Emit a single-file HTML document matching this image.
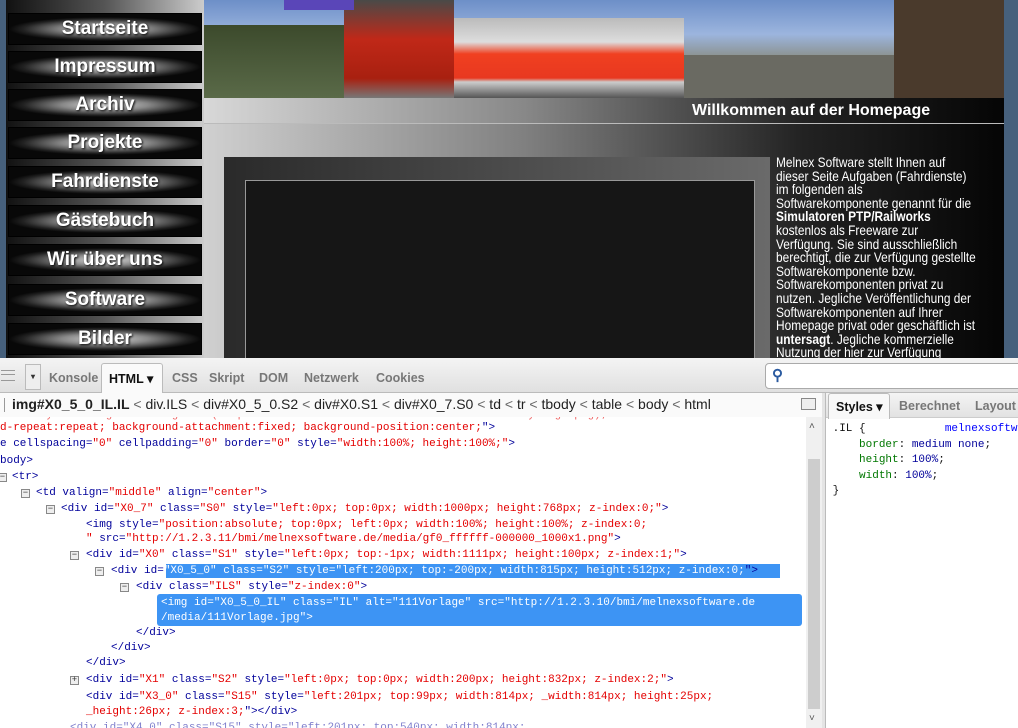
<!DOCTYPE html>
<html><head><meta charset="utf-8">
<style>
*{margin:0;padding:0;box-sizing:border-box}
body{width:1018px;height:728px;overflow:hidden;position:relative;background:#fff;font-family:"Liberation Sans",sans-serif}
.abs{position:absolute}
#site{left:0;top:0;width:1018px;height:358px;background:#46607c;overflow:hidden}
#side{left:6px;top:0;width:198px;height:358px;background:linear-gradient(90deg,#111 0%,#555 50%,#ccc 100%)}
.btn{position:absolute;left:8px;width:194px;height:32px;background:radial-gradient(ellipse 50% 40% at 50% 50%,#d8d8d8 0%,#888 45%,#222 85%,#080808 100%);border:1px solid #000;color:#fff;font-weight:bold;font-size:19px;text-align:center;line-height:30px;text-shadow:1px 1px 2px #000}
#hdr{left:204px;top:0;width:800px;height:98px;background:linear-gradient(180deg,#6d8fc8 0%,#9cb5de 35%,#8a8f88 60%,#56604a 100%);overflow:hidden}
#title{left:204px;top:98px;width:800px;height:26px;background:linear-gradient(90deg,#d8d8d8 0%,#888 40%,#222 75%,#050505 100%);border-bottom:1px solid #bbb;color:#fff;font-weight:bold;font-size:16px;line-height:25px;padding-left:488px}
#cont{left:204px;top:124px;width:800px;height:234px;background:linear-gradient(90deg,#d0d0d0 0%,#808080 40%,#222 75%,#050505 100%)}
#box{left:224px;top:157px;width:546px;height:201px;background:linear-gradient(90deg,#2a2a2a,#6a6a6a)}
#img{left:245px;top:180px;width:510px;height:178px;background:#161616;border:1px solid #999;border-bottom:none}
#txt{left:776px;top:156px;width:280px;color:#fff;font-size:14px;line-height:13.6px;transform:scaleX(0.85);transform-origin:0 0;white-space:nowrap}
#tb{left:0;top:358px;width:1018px;height:35px;background:linear-gradient(#f4f4f4,#e0e0e0);border-bottom:1px solid #bbb;font-size:12.5px;font-weight:bold;color:#777}
.tab{position:absolute;top:19px}
#bc{left:0;top:393px;width:822px;height:24px;background:#fafafa;font-size:14px;color:#222}
#code{left:0;top:417px;width:806px;height:311px;background:#fff;font-family:"Liberation Mono",monospace;font-size:11px;color:#00009a;white-space:pre;overflow:hidden}
.l{position:absolute;line-height:13px}
.r{color:#e40000}
.bx{position:absolute;width:9px;height:9px;border:1px solid #888;background:#eee;font-size:9px;line-height:7px;text-align:center;color:#333}
#rp{left:825px;top:393px;width:193px;height:335px;background:#fff;border-left:1px solid #bbb}
</style></head><body>
<div id="site" class="abs">
 <div id="side" class="abs"></div>
 <div class="btn" style="top:13px">Startseite</div>
 <div class="btn" style="top:51px">Impressum</div>
 <div class="btn" style="top:89px">Archiv</div>
 <div class="btn" style="top:127px">Projekte</div>
 <div class="btn" style="top:166px">Fahrdienste</div>
 <div class="btn" style="top:205px">Gästebuch</div>
 <div class="btn" style="top:244px">Wir über uns</div>
 <div class="btn" style="top:284px">Software</div>
 <div class="btn" style="top:323px">Bilder</div>
 <div id="hdr" class="abs">
  <div class="abs" style="left:0;top:25px;width:140px;height:73px;background:linear-gradient(#3c4a2c,#5a6a48)"></div>
  <div class="abs" style="left:140px;top:0;width:110px;height:98px;background:linear-gradient(#4a4a48 0%,#c02818 40%,#a82010 80%,#777 100%)"></div>
  <div class="abs" style="left:250px;top:18px;width:230px;height:80px;background:linear-gradient(180deg,#bbb 0%,#ddd 30%,#f04020 45%,#e83820 75%,#ccc 80%,#555 100%)"></div>
  <div class="abs" style="left:480px;top:55px;width:320px;height:43px;background:#6a6a62"></div>
  <div class="abs" style="left:690px;top:0;width:110px;height:98px;background:#4a3a2c"></div>
  <div class="abs" style="left:80px;top:0;width:70px;height:10px;background:#5a46b8"></div>
 </div>
 <div id="title" class="abs">Willkommen auf der Homepage</div>
 <div id="cont" class="abs"></div>
 <div id="box" class="abs"></div>
 <div id="img" class="abs"></div>
 <div id="txt" class="abs">Melnex Software stellt Ihnen auf<br>dieser Seite Aufgaben (Fahrdienste)<br>im folgenden als<br>Softwarekomponente genannt für die<br><b>Simulatoren PTP/Railworks</b><br>kostenlos als Freeware zur<br>Verfügung. Sie sind ausschließlich<br>berechtigt, die zur Verfügung gestellte<br>Softwarekomponente bzw.<br>Softwarekomponenten privat zu<br>nutzen. Jegliche Veröffentlichung der<br>Softwarekomponenten auf Ihrer<br>Homepage privat oder geschäftlich ist<br><b>untersagt</b>. Jegliche kommerzielle<br>Nutzung der hier zur Verfügung</div>
</div>
<div id="tb" class="abs">
 <div class="abs" style="left:1px;top:12px;width:14px;height:11px;border-top:1px solid #999;border-bottom:1px solid #999"></div>
 <div class="abs" style="left:1px;top:16px;width:14px;height:1px;background:#999"></div>
 <div class="abs" style="left:25px;top:6px;width:16px;height:26px;border:1px solid #bbb;background:#eee;font-size:8px;text-align:center;line-height:24px;color:#333">▾</div>
 <div class="tab" style="left:49px;top:13px">Konsole</div>
 <div class="abs" style="left:101px;top:5px;width:62px;height:31px;background:#fafafa;border:1px solid #bbb;border-bottom:none;border-radius:3px 3px 0 0"></div>
 <div class="tab" style="left:109px;top:13px;color:#111">HTML ▾</div>
 <div class="tab" style="left:172px;top:13px">CSS</div>
 <div class="tab" style="left:209px;top:13px">Skript</div>
 <div class="tab" style="left:259px;top:13px">DOM</div>
 <div class="tab" style="left:304px;top:13px">Netzwerk</div>
 <div class="tab" style="left:376px;top:13px">Cookies</div>
 <div class="abs" style="left:765px;top:5px;width:260px;height:26px;background:#fff;border:1px solid #aaa;border-radius:4px"><span style="position:absolute;left:6px;top:2px;color:#2a5aa0;font-size:15px">⚲</span></div>
</div>
<div id="bc" class="abs">
 <div class="abs" style="left:4px;top:5px;width:1px;height:14px;background:#999"></div>
 <div class="abs" style="left:12px;top:3px;white-space:nowrap"><b>img#X0_5_0_IL.IL</b> <span style="color:#666">&lt;</span> div.ILS <span style="color:#666">&lt;</span> div#X0_5_0.S2 <span style="color:#666">&lt;</span> div#X0.S1 <span style="color:#666">&lt;</span> div#X0_7.S0 <span style="color:#666">&lt;</span> td <span style="color:#666">&lt;</span> tr <span style="color:#666">&lt;</span> tbody <span style="color:#666">&lt;</span> table <span style="color:#666">&lt;</span> body <span style="color:#666">&lt;</span> html</div>
 <div class="abs" style="left:801px;top:5px;width:15px;height:12px;border:1px solid #888;background:#eee"></div>
</div>
<div id="code" class="abs">
<div class="l r" style="left:0;top:-8px;opacity:.6">ble" style="background-image:url(http://1.2.3.11/bmi/melnexsoftware.de/media/bodyimage.png);</div>
<div class="l" style="left:0;top:5px"><span class="r">d-repeat:repeat; background-attachment:fixed; background-position:center;</span>"&gt;</div>
<div class="l" style="left:0;top:21px">e cellspacing=<span class="r">"0"</span> cellpadding=<span class="r">"0"</span> border=<span class="r">"0"</span> style=<span class="r">"width:100%; height:100%;"</span>&gt;</div>
<div class="l" style="left:0;top:38px">body&gt;</div>
<div class="bx" style="left:-2px;top:56px">−</div><div class="l" style="left:12px;top:54px">&lt;tr&gt;</div>
<div class="bx" style="left:21px;top:72px">−</div><div class="l" style="left:36px;top:70px">&lt;td valign=<span class="r">"middle"</span> align=<span class="r">"center"</span>&gt;</div>
<div class="bx" style="left:46px;top:88px">−</div><div class="l" style="left:61px;top:86px">&lt;div id=<span class="r">"X0_7"</span> class=<span class="r">"S0"</span> style=<span class="r">"left:0px; top:0px; width:1000px; height:768px; z-index:0;"</span>&gt;</div>
<div class="l" style="left:86px;top:102px">&lt;img style=<span class="r">"position:absolute; top:0px; left:0px; width:100%; height:100%; z-index:0;</span></div>
<div class="l" style="left:86px;top:116px"><span class="r">"</span> src=<span class="r">"http://1.2.3.11/bmi/melnexsoftware.de/media/gf0_ffffff-000000_1000x1.png"</span>&gt;</div>
<div class="bx" style="left:70px;top:134px">−</div><div class="l" style="left:86px;top:132px">&lt;div id=<span class="r">"X0"</span> class=<span class="r">"S1"</span> style=<span class="r">"left:0px; top:-1px; width:1111px; height:100px; z-index:1;"</span>&gt;</div>
<div class="abs" style="left:166px;top:147px;width:614px;height:14px;background:#3d94f4"></div>
<div class="bx" style="left:95px;top:150px">−</div><div class="l" style="left:111px;top:148px">&lt;div id=<span style="color:#fff">"X0_5_0" class="S2" style="left:200px; top:-200px; width:815px; height:512px; z-index:0;</span>"&gt;</div>
<div class="bx" style="left:120px;top:166px">−</div><div class="l" style="left:136px;top:164px">&lt;div class=<span class="r">"ILS"</span> style=<span class="r">"z-index:0"</span>&gt;</div>
<div class="abs" style="left:157px;top:177px;width:645px;height:32px;background:#3d94f4;border-radius:3px"></div>
<div class="l" style="left:161px;top:180px;color:#fff">&lt;img id="X0_5_0_IL" class="IL" alt="111Vorlage" src="http://1.2.3.10/bmi/melnexsoftware.de</div>
<div class="l" style="left:161px;top:195px;color:#fff">/media/111Vorlage.jpg"&gt;</div>
<div class="l" style="left:136px;top:210px">&lt;/div&gt;</div>
<div class="l" style="left:111px;top:225px">&lt;/div&gt;</div>
<div class="l" style="left:86px;top:240px">&lt;/div&gt;</div>
<div class="bx" style="left:70px;top:259px">+</div><div class="l" style="left:86px;top:257px">&lt;div id=<span class="r">"X1"</span> class=<span class="r">"S2"</span> style=<span class="r">"left:0px; top:0px; width:200px; height:832px; z-index:2;"</span>&gt;</div>
<div class="l" style="left:86px;top:274px">&lt;div id=<span class="r">"X3_0"</span> class=<span class="r">"S15"</span> style=<span class="r">"left:201px; top:99px; width:814px; _width:814px; height:25px;</span></div>
<div class="l" style="left:86px;top:289px"><span class="r">_height:26px; z-index:3;</span>"&gt;&lt;/div&gt;</div>
<div class="l" style="left:70px;top:305px;opacity:.5">&lt;div id="X4_0" class="S15" style="left:201px; top:540px; width:814px;</div>
</div>
<div class="abs" style="left:806px;top:417px;width:16px;height:311px;background:#f0f0f0"><div class="abs" style="left:3px;top:4px;font-size:10px;color:#555">˄</div><div class="abs" style="left:2px;top:42px;width:12px;height:250px;background:#cdcdcd"></div><div class="abs" style="left:3px;top:296px;font-size:10px;color:#555">˅</div></div>
<div class="abs" style="left:822px;top:393px;width:3px;height:335px;background:#e4e4e4"></div>
<div id="rp" class="abs">
 <div class="abs" style="left:0;top:0;width:193px;height:25px;background:linear-gradient(#f4f4f4,#e2e2e2);border-bottom:1px solid #ccc"></div>
 <div class="abs" style="left:2px;top:0;width:62px;height:26px;background:#f8f8f8;border:1px solid #bbb;border-bottom:none;border-radius:3px 3px 0 0"></div>
 <div class="abs" style="left:10px;top:6px;font-size:12.5px;font-weight:bold;color:#111">Styles ▾</div>
 <div class="abs" style="left:73px;top:6px;font-size:12.5px;font-weight:bold;color:#777">Berechnet</div>
 <div class="abs" style="left:149px;top:6px;font-size:12.5px;font-weight:bold;color:#777">Layout</div>
 <div class="abs" style="left:0;top:29px;font-family:'Liberation Mono',monospace;font-size:11px;line-height:15.5px;white-space:pre;color:#111"> .IL {            <span style="color:#00f">melnexsoftw</span>
     <span style="color:#070">border</span>: <span style="color:#00009a">medium none</span>;
     <span style="color:#070">height</span>: <span style="color:#00009a">100%</span>;
     <span style="color:#070">width</span>: <span style="color:#00009a">100%</span>;
 }</div>
</div>
</body></html>
